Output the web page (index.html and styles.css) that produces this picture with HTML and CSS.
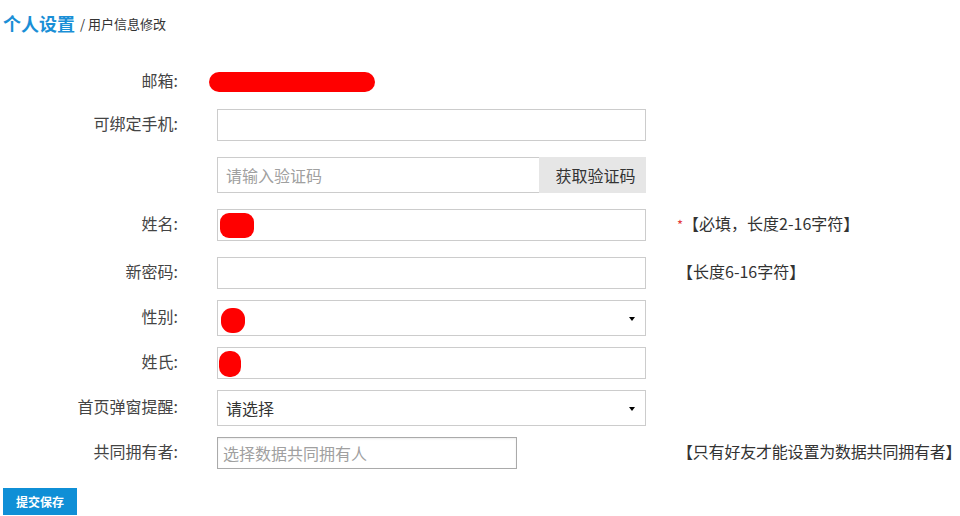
FILE: index.html
```html
<!DOCTYPE html>
<html lang="zh-CN">
<head>
<meta charset="utf-8">
<title>个人设置</title>
<link rel="stylesheet" href="styles.css">
</head>
<body>
<div class="page">
  <div class="title"><span class="title-main">个人设置</span><span class="title-sub">/ 用户信息修改</span></div>
  <div class="form">
    <div class="row row-email">
      <div class="label">邮箱:</div>
      <div class="field"><span class="redact redact-email"></span></div>
    </div>
    <div class="row row-gap-s">
      <div class="label">可绑定手机:</div>
      <div class="field"><div class="input"></div></div>
    </div>
    <div class="row row-gap-l">
      <div class="label"></div>
      <div class="field"><div class="code-group"><div class="input code-input placeholder">请输入验证码</div><div class="code-btn">获取验证码</div></div></div>
    </div>
    <div class="row row-gap-l">
      <div class="label">姓名:</div>
      <div class="field"><div class="input"><span class="redact redact-name"></span></div></div>
      <div class="hint"><span class="star">*</span>【必填，长度2-16字符】</div>
    </div>
    <div class="row row-gap-l">
      <div class="label">新密码:</div>
      <div class="field"><div class="input"></div></div>
      <div class="hint">【长度6-16字符】</div>
    </div>
    <div class="row row-gap-s">
      <div class="label">性别:</div>
      <div class="field"><div class="input select"><span class="redact redact-gender"></span><span class="caret"></span></div></div>
    </div>
    <div class="row row-gap-s">
      <div class="label">姓氏:</div>
      <div class="field"><div class="input"><span class="redact redact-surname"></span></div></div>
    </div>
    <div class="row row-gap-s">
      <div class="label">首页弹窗提醒:</div>
      <div class="field"><div class="input select">请选择<span class="caret"></span></div></div>
    </div>
    <div class="row row-gap-s">
      <div class="label">共同拥有者:</div>
      <div class="field"><div class="input owner placeholder">选择数据共同拥有人</div></div>
      <div class="hint hint-owner">【只有好友才能设置为数据共同拥有者】</div>
    </div>
  </div>
  <div class="actions"><button class="submit">提交保存</button></div>
</div>
</body>
</html>
```
FILE: styles.css
```css
html, body {
  margin: 0;
  padding: 0;
  background: #ffffff;
}
body {
  font-family: "Noto Sans CJK SC", "Noto Sans", "Liberation Sans", sans-serif;
  color: #333333;
  font-size: 16px;
  overflow: hidden;
}
.page {
  padding: 0 3px;
}
.title {
  height: 46px;
  display: flex;
  align-items: center;
}
.title-main {
  color: #1a8fd6;
  font-size: 18px;
  font-weight: bold;
}
.title-sub {
  font-size: 13px;
  color: #333;
  margin-left: 5px;
}
.form {
  display: flex;
  flex-direction: column;
  margin-top: 20px;
}
.row {
  display: flex;
  align-items: center;
  min-height: 32px;
}
.row-gap-s { margin-top: 11px; }
.row-gap-l { margin-top: 16px; }
.label {
  flex: 0 0 175px;
  width: 175px;
  text-align: right;
  font-size: 16px;
  color: #444;
  line-height: 20px;
  position: relative;
  top: -2px;
}
.field {
  flex: 0 0 429px;
  margin-left: 39px;
  width: 429px;
  display: flex;
  align-items: center;
}
.input {
  box-sizing: border-box;
  width: 429px;
  height: 32px;
  border: 1px solid #cccccc;
  background: #fff;
  display: flex;
  align-items: center;
  padding-left: 8px;
  position: relative;
  font-size: 16px;
  color: #333;
}
.select {
  height: 36px;
}
.placeholder {
  color: #a0a0a0;
}
.code-group {
  display: flex;
  width: 429px;
  height: 36px;
}
.code-input {
  width: 322px;
  height: 36px;
  border-right: none;
}
.code-btn {
  width: 107px;
  height: 36px;
  background: #e6e6e6;
  display: flex;
  align-items: center;
  justify-content: center;
  font-size: 16px;
  color: #333;
  box-sizing: border-box;
  padding-left: 6px;
}
.owner {
  width: 300px;
  border-color: #aaaaaa;
  box-shadow: inset 0 1px 2px rgba(0,0,0,0.08);
  padding-left: 5px;
}
.caret {
  position: absolute;
  right: 10px;
  top: 16px;
  width: 0;
  height: 0;
  border-left: 3px solid transparent;
  border-right: 3px solid transparent;
  border-top: 4px solid #000;
}
.hint {
  flex: 0 0 auto;
  margin-left: 31px;
  font-size: 16px;
  color: #333;
  white-space: nowrap;
  position: relative;
  top: -2px;
}
.hint-owner {
  margin-left: 31px;
  letter-spacing: -0.2px;
}
.star {
  color: #e4393c;
  font-size: 13px;
  margin-right: 0;
}
.redact {
  display: inline-block;
  background: #ff0000;
}
.redact-email {
  width: 166px;
  height: 20px;
  border-radius: 10px;
  margin-left: -8px;
}
.row-email {
  height: 32px;
}
.redact-name {
  width: 34px;
  height: 25px;
  border-radius: 9px;
  margin-left: -6px;
}
.redact-gender {
  width: 24px;
  height: 25px;
  border-radius: 11px;
  margin-left: -5px;
  margin-top: 4px;
}
.redact-surname {
  width: 22px;
  height: 26px;
  border-radius: 10px;
  margin-left: -7px;
  margin-top: 2px;
}
.actions {
  margin-top: 19px;
}
.submit {
  width: 74px;
  height: 27px;
  border: none;
  background: #0f8fd6;
  color: #ffffff;
  font-family: "Noto Sans CJK SC", sans-serif;
  font-size: 12px;
  font-weight: bold;
  padding: 0;
  cursor: pointer;
}
```
